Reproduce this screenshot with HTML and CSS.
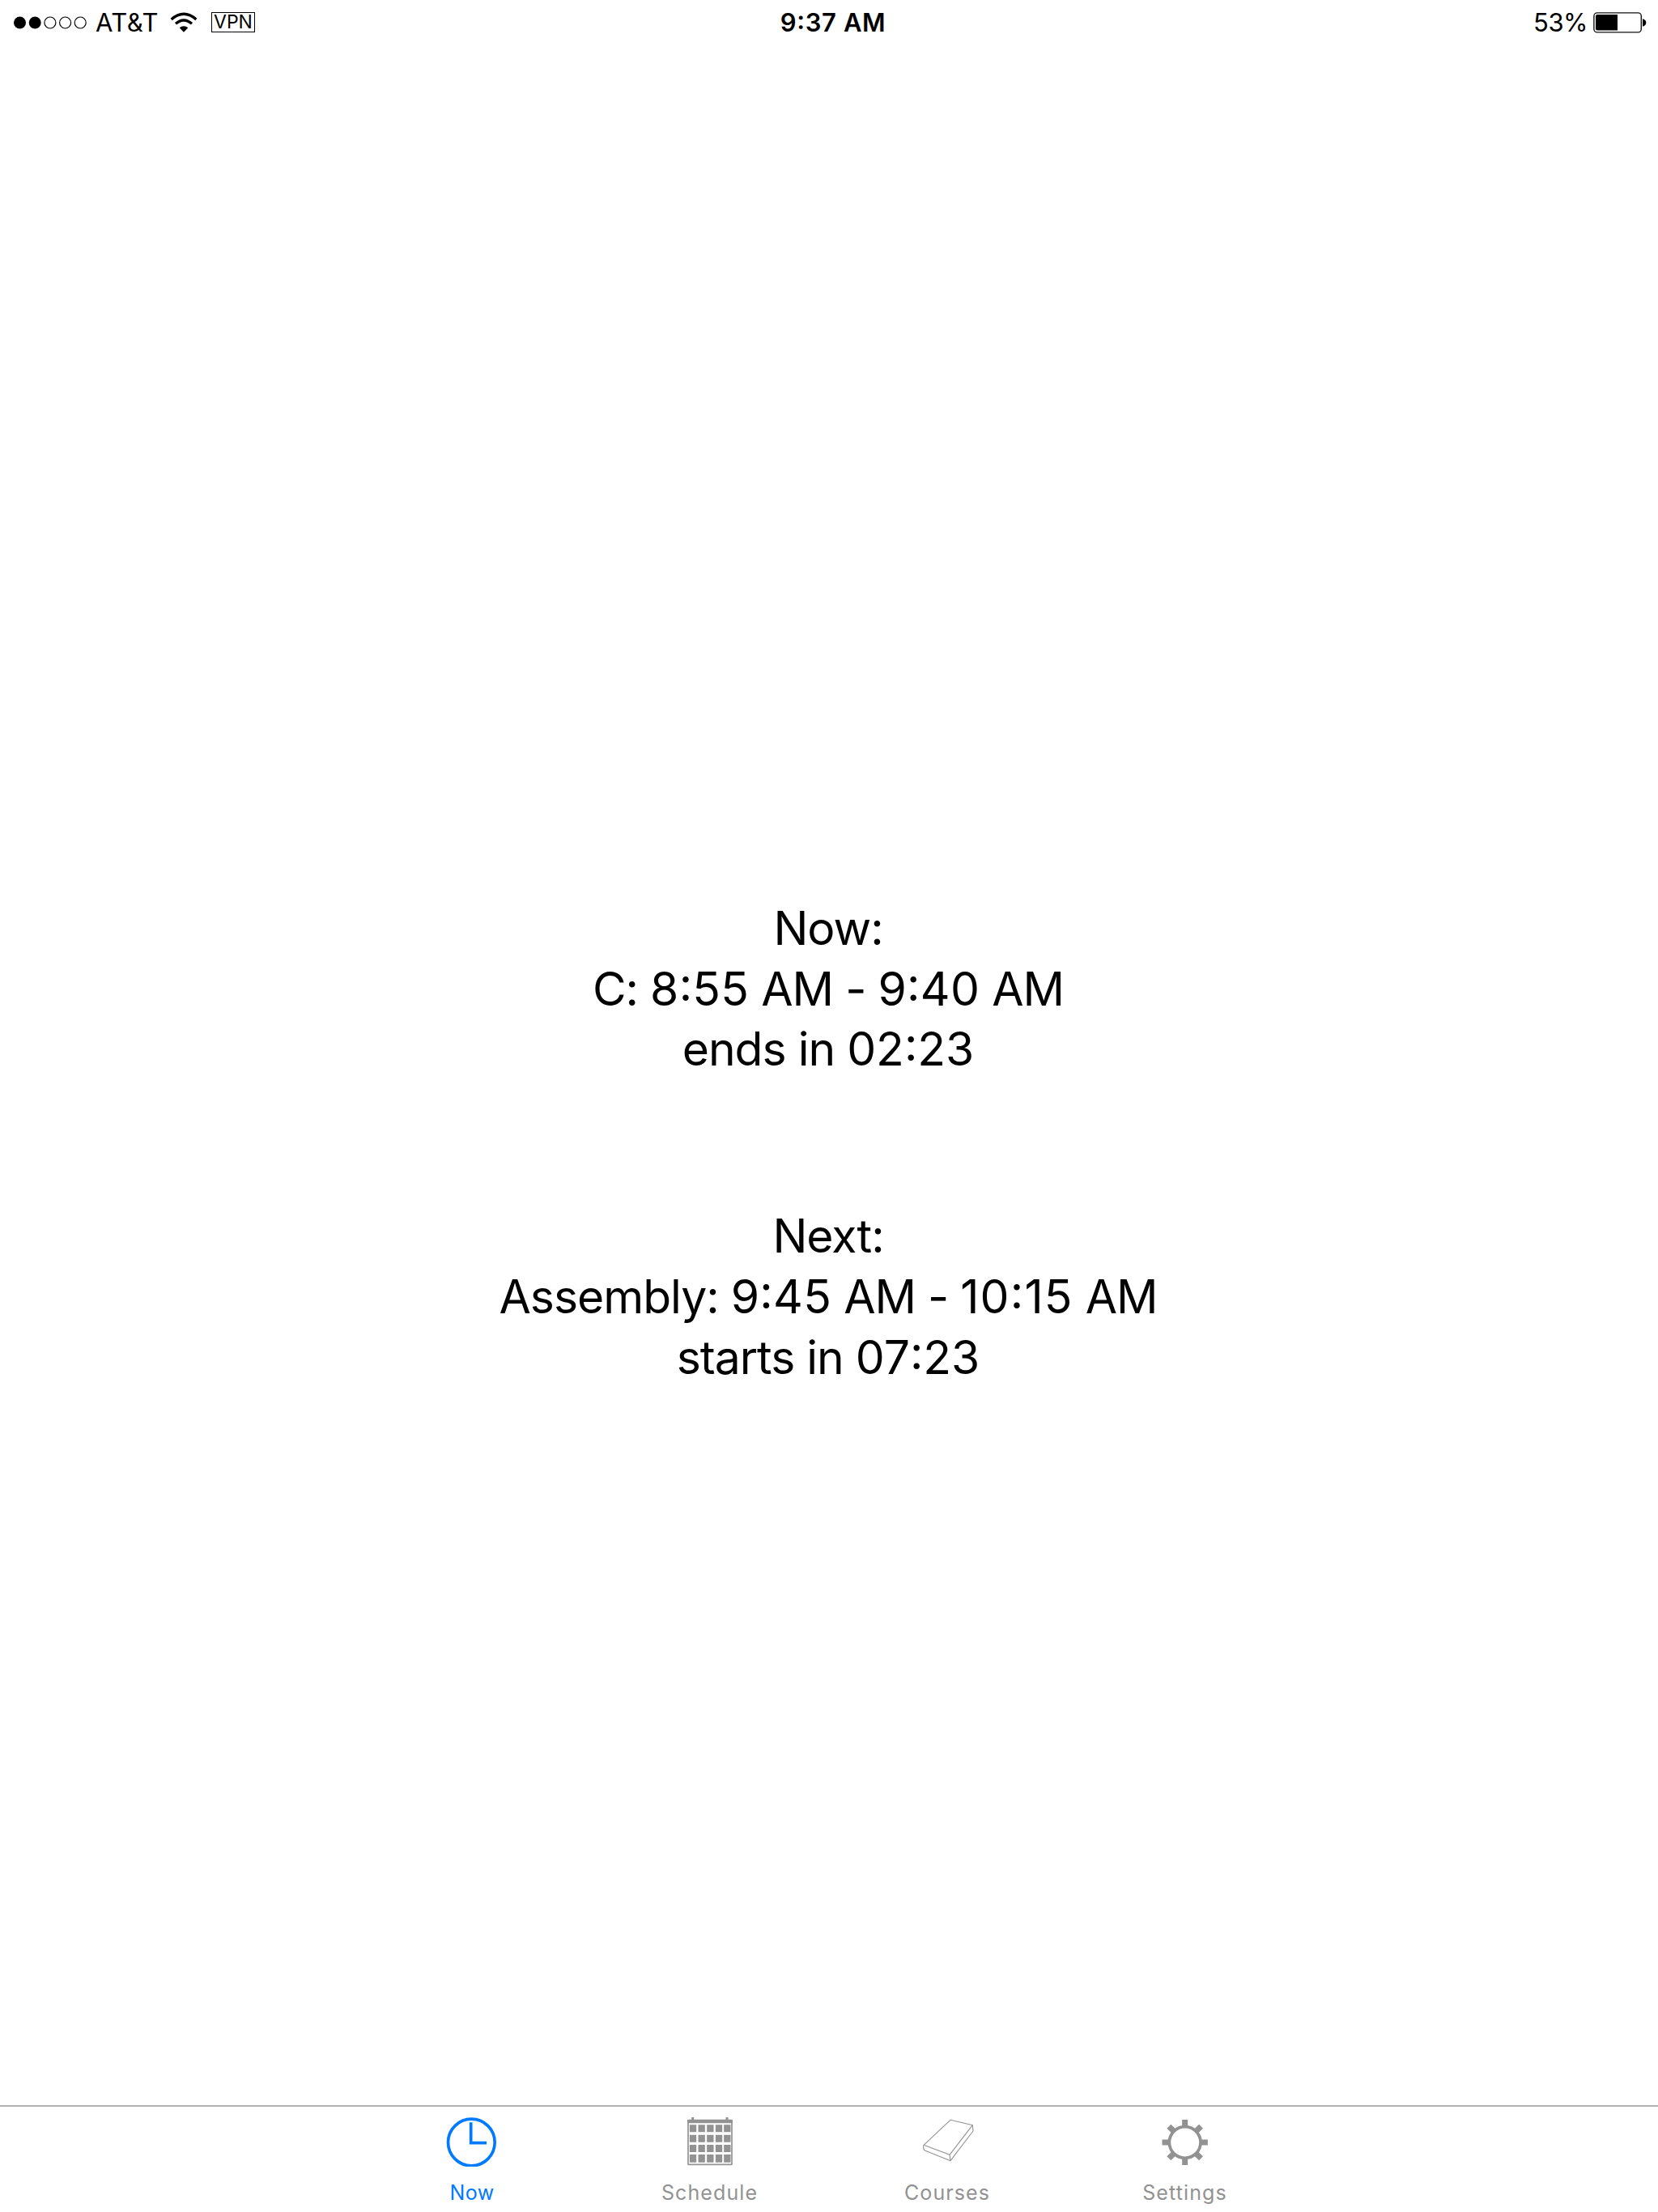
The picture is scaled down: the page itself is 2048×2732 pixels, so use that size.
FILE: index.html
```html
<!DOCTYPE html>
<html lang="en">
<head>
<meta charset="utf-8">
<title>Now</title>
<link rel="stylesheet" href="styles.css">
</head>
<body>
<div class="screen">
  <header class="status">
    <div class="status-left">
      <svg class="signal" width="92" height="18" viewBox="0 0 92 18">
        <circle cx="8.5" cy="9" r="7.5"/><circle cx="27.2" cy="9" r="7.5"/>
        <g fill="none" stroke="#000" stroke-width="1.2"><circle cx="45.9" cy="9" r="7"/><circle cx="64.6" cy="9" r="7"/><circle cx="83.2" cy="9" r="7"/></g>
      </svg>
      <span class="carrier">AT&amp;T</span>
      <svg class="wifi" width="34" height="26" viewBox="0 0 102 78">
        <g fill="none" stroke="#000" stroke-width="10">
          <path d="M5 27Q51 -13 97 27"/><path d="M21 43Q51 17 81 43"/>
        </g>
        <path d="M35 58Q51 45 67 58L51 74Z"/>
      </svg>
      <span class="vpn">VPN</span>
    </div>
    <span class="clock">9<span class="colon">:</span>37 AM</span>
    <div class="status-right">
      <span class="percent">53%</span>
      <svg class="battery" width="66" height="26" viewBox="0 0 66 26">
        <rect x=".9" y=".9" width="58.4" height="24" rx="4" fill="none" stroke="#111" stroke-width="1.4"/>
        <path d="M5 3H30V22.5H5Q3 22.5 3 20.5V5Q3 3 5 3Z"/>
        <path d="M61 8.3Q65.3 9.5 65.3 13T61 17.7Z"/>
      </svg>
    </div>
  </header>
  <main class="content">
    <section class="period">
      <p>Now:</p>
      <p>C: <span class="time">8<span class="colon">:</span>55</span> AM - <span class="time">9<span class="colon">:</span>40</span> AM</p>
      <p>ends in <span class="countdown">02<span class="colon">:</span>23</span></p>
    </section>
    <section class="period">
      <p>Next:</p>
      <p>Assembly: <span class="time">9<span class="colon">:</span>45</span> AM - <span class="time wide">10<span class="colon">:</span>15</span> AM</p>
      <p>starts in <span class="countdown">07<span class="colon">:</span>23</span></p>
    </section>
  </main>
  <nav class="tabs">
    <div class="tab active">
      <svg class="icon" viewBox="9 36 300 222" fill="none" stroke="currentColor">
        <circle cx="157" cy="168" r="86.500" stroke-width="11"/>
        <path d="M155 94V170H213" stroke-width="11"/>
      </svg>
      <span class="label-now">Now</span>
    </div>
    <div class="tab">
      <svg class="icon" viewBox="80.500 36 300 222" fill="currentColor">
        <rect x="149.500" y="86" width="162" height="164" rx="2" fill="none" stroke="currentColor" stroke-width="5"/>
        <path d="M147 84H314V97H147ZM162 75H171V92H162ZM289 75H298V92H289Z"/>
        <path d="M155 103h25v27h-25zM187 103h25v27h-25zM219 103h25v27h-25zM251 103h25v27h-25zM282 103h25v27h-25zM155 140h25v27h-25zM187 140h25v27h-25zM219 140h25v27h-25zM251 140h25v27h-25zM282 140h25v27h-25zM155 177h25v27h-25zM187 177h25v27h-25zM219 177h25v27h-25zM251 177h25v27h-25zM282 177h25v27h-25zM155 213h25v29h-25zM187 213h25v29h-25zM219 213h25v29h-25zM251 213h25v29h-25zM282 213h25v29h-25z"/>
      </svg>
      <span>Schedule</span>
    </div>
    <div class="tab">
      <svg class="icon" viewBox="60 36 300 222" fill="none" stroke="currentColor" stroke-width="3.300" stroke-linejoin="round">
        <path d="M222 85L304 104L219 214L123 178ZM304 104L306 126L222 236L219 214M222 236L127 198Q119 190 123 178"/>
      </svg>
      <span>Courses</span>
    </div>
    <div class="tab">
      <svg class="icon" viewBox="71.500 36 300 222" fill="none" stroke="currentColor">
        <circle cx="220.500" cy="168" r="58" stroke-width="11"/>
        <path d="M220.500 84V110M220.500 226V252M136 168H162M279 168H305M161 108.500L181 128.500M260 207.500L280 227.500M161 227.500L181 207.500M260 128.500L280 108.500" stroke-width="21"/>
      </svg>
      <span>Settings</span>
    </div>
  </nav>
</div>
</body>
</html>
```
FILE: styles.css
```css
* { box-sizing: border-box; }
body { margin: 0; background: #fff; color: #000; font-family: Inter, "Liberation Sans", sans-serif; }
.screen { width: 2048px; height: 2732px; display: flex; flex-direction: column; }
.status { height: 55px; display: grid; grid-template-columns: 1fr auto 1fr; align-items: center; padding: 0 14px 0 16px; font-size: 31px; line-height: 55px; white-space: nowrap; }
.status svg { display: block; }
.status-left, .status-right { display: flex; align-items: center; }
.status-right { justify-content: flex-end; }
.carrier { margin-left: 10px; width: 78px; letter-spacing: 0.5px; }
.wifi { margin-left: 14px; }
.vpn { margin-left: 17px; width: 54px; height: 25px; border: 1.500px solid #000; font-size: 23px; line-height: 23px; text-align: center; }
.clock { font-weight: 600; letter-spacing: 0.6px; padding-left: 8px; }
.colon { vertical-align: 0.11em; line-height: 0; }
.percent { margin-right: 7px; letter-spacing: -0.5px; }
.content { flex: 1; padding-top: 1055px; display: flex; flex-direction: column; align-items: center; gap: 156px; font-size: 57px; line-height: 74.700px; letter-spacing: -1px; text-align: center; white-space: nowrap; padding-right: 2px; }
.period p { margin: 0; }
.time { letter-spacing: 0.3px; }
.wide { letter-spacing: 1.2px; }
.countdown { letter-spacing: 0; }
.tabs { height: 132px; border-top: 2px solid #b2b2b2; display: flex; justify-content: center; padding-right: 1.500px; }
.tab { width: 293.500px; display: flex; flex-direction: column; align-items: center; color: #929292; font-size: 25px; line-height: 30px; letter-spacing: 1.1px; }
.active { color: #007aff; }
.label-now { letter-spacing: 0.4px; }
.icon { display: block; width: 100px; height: 74px; margin-bottom: 17px; }
```
